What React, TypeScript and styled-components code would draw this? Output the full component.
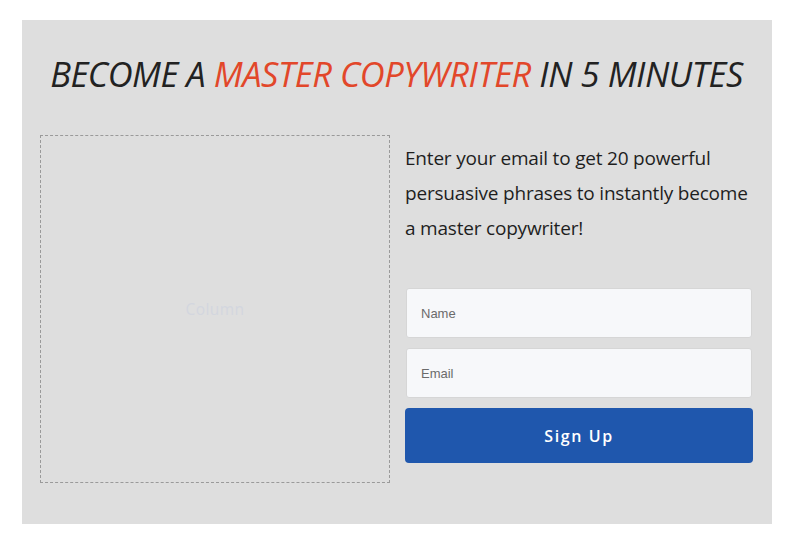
import React from 'react';
import styled, { createGlobalStyle } from 'styled-components';

const GlobalStyle = createGlobalStyle`
  html, body {
    margin: 0;
    padding: 0;
    background: #ffffff;
  }
  body {
    font-family: "Open Sans", "Liberation Sans", sans-serif;
  }
`;

const Panel = styled.section`
  width: 750px;
  height: 504px;
  margin: 20px 28px 22px 22px;
  box-sizing: border-box;
  background: #dedede;
  padding: 0 19px 0 18px;
  display: flex;
  flex-direction: column;
`;

const Heading = styled.h1`
  margin: 31px 0 0 0;
  font-family: "Open Sans", sans-serif;
  font-style: italic;
  font-weight: 400;
  font-size: 34.5px;
  line-height: 46px;
  letter-spacing: -0.45px;
  text-align: center;
  color: #222222;
  span {
    color: #e2472a;
  }
`;

const Columns = styled.div`
  display: grid;
  grid-template-columns: 350px 348px;
  column-gap: 15px;
  margin-top: 38px;
`;

const Placeholder = styled.div`
  height: 348px;
  box-sizing: border-box;
  border: 1px dashed #9a9a9a;
  display: flex;
  align-items: center;
  justify-content: center;
  font-family: "Open Sans", sans-serif;
  font-size: 15.5px;
  color: #d3d6de;
  letter-spacing: 0.4px;
`;

const Side = styled.div`
  display: flex;
  flex-direction: column;
`;

const Intro = styled.p`
  margin: 6px 0 0 0;
  font-family: "Open Sans", sans-serif;
  font-size: 19px;
  line-height: 35px;
  letter-spacing: -0.2px;
  color: #1e1e1e;
`;

const Form = styled.form`
  display: flex;
  flex-direction: column;
  gap: 10px;
  margin-top: 42px;
`;

const Field = styled.input`
  height: 50px;
  box-sizing: border-box;
  margin: 0 1px;
  padding: 0 14px;
  border: 1px solid #d6d6d6;
  border-radius: 3px;
  background: #f7f8fa;
  font-family: "Liberation Sans", Arial, sans-serif;
  font-size: 13px;
  color: #333;
  outline: none;
  &::placeholder {
    color: #6b6b6b;
  }
`;

const SubmitButton = styled.button`
  height: 55px;
  border: none;
  border-radius: 4px;
  background: #1f57ad;
  color: #ffffff;
  font-family: "Open Sans", sans-serif;
  font-weight: 600;
  font-size: 16px;
  letter-spacing: 1.6px;
  cursor: pointer;
`;

export default function App() {
  return (
    <>
      <GlobalStyle />
      <Panel>
        <Heading>
          BECOME A <span>MASTER COPYWRITER</span> IN 5 MINUTES
        </Heading>
        <Columns>
          <Placeholder>Column</Placeholder>
          <Side>
            <Intro>
              Enter your email to get 20 powerful persuasive phrases to instantly become a master copywriter!
            </Intro>
            <Form onSubmit={(e) => e.preventDefault()}>
              <Field type="text" placeholder="Name" />
              <Field type="email" placeholder="Email" />
              <SubmitButton type="submit">Sign Up</SubmitButton>
            </Form>
          </Side>
        </Columns>
      </Panel>
    </>
  );
}
